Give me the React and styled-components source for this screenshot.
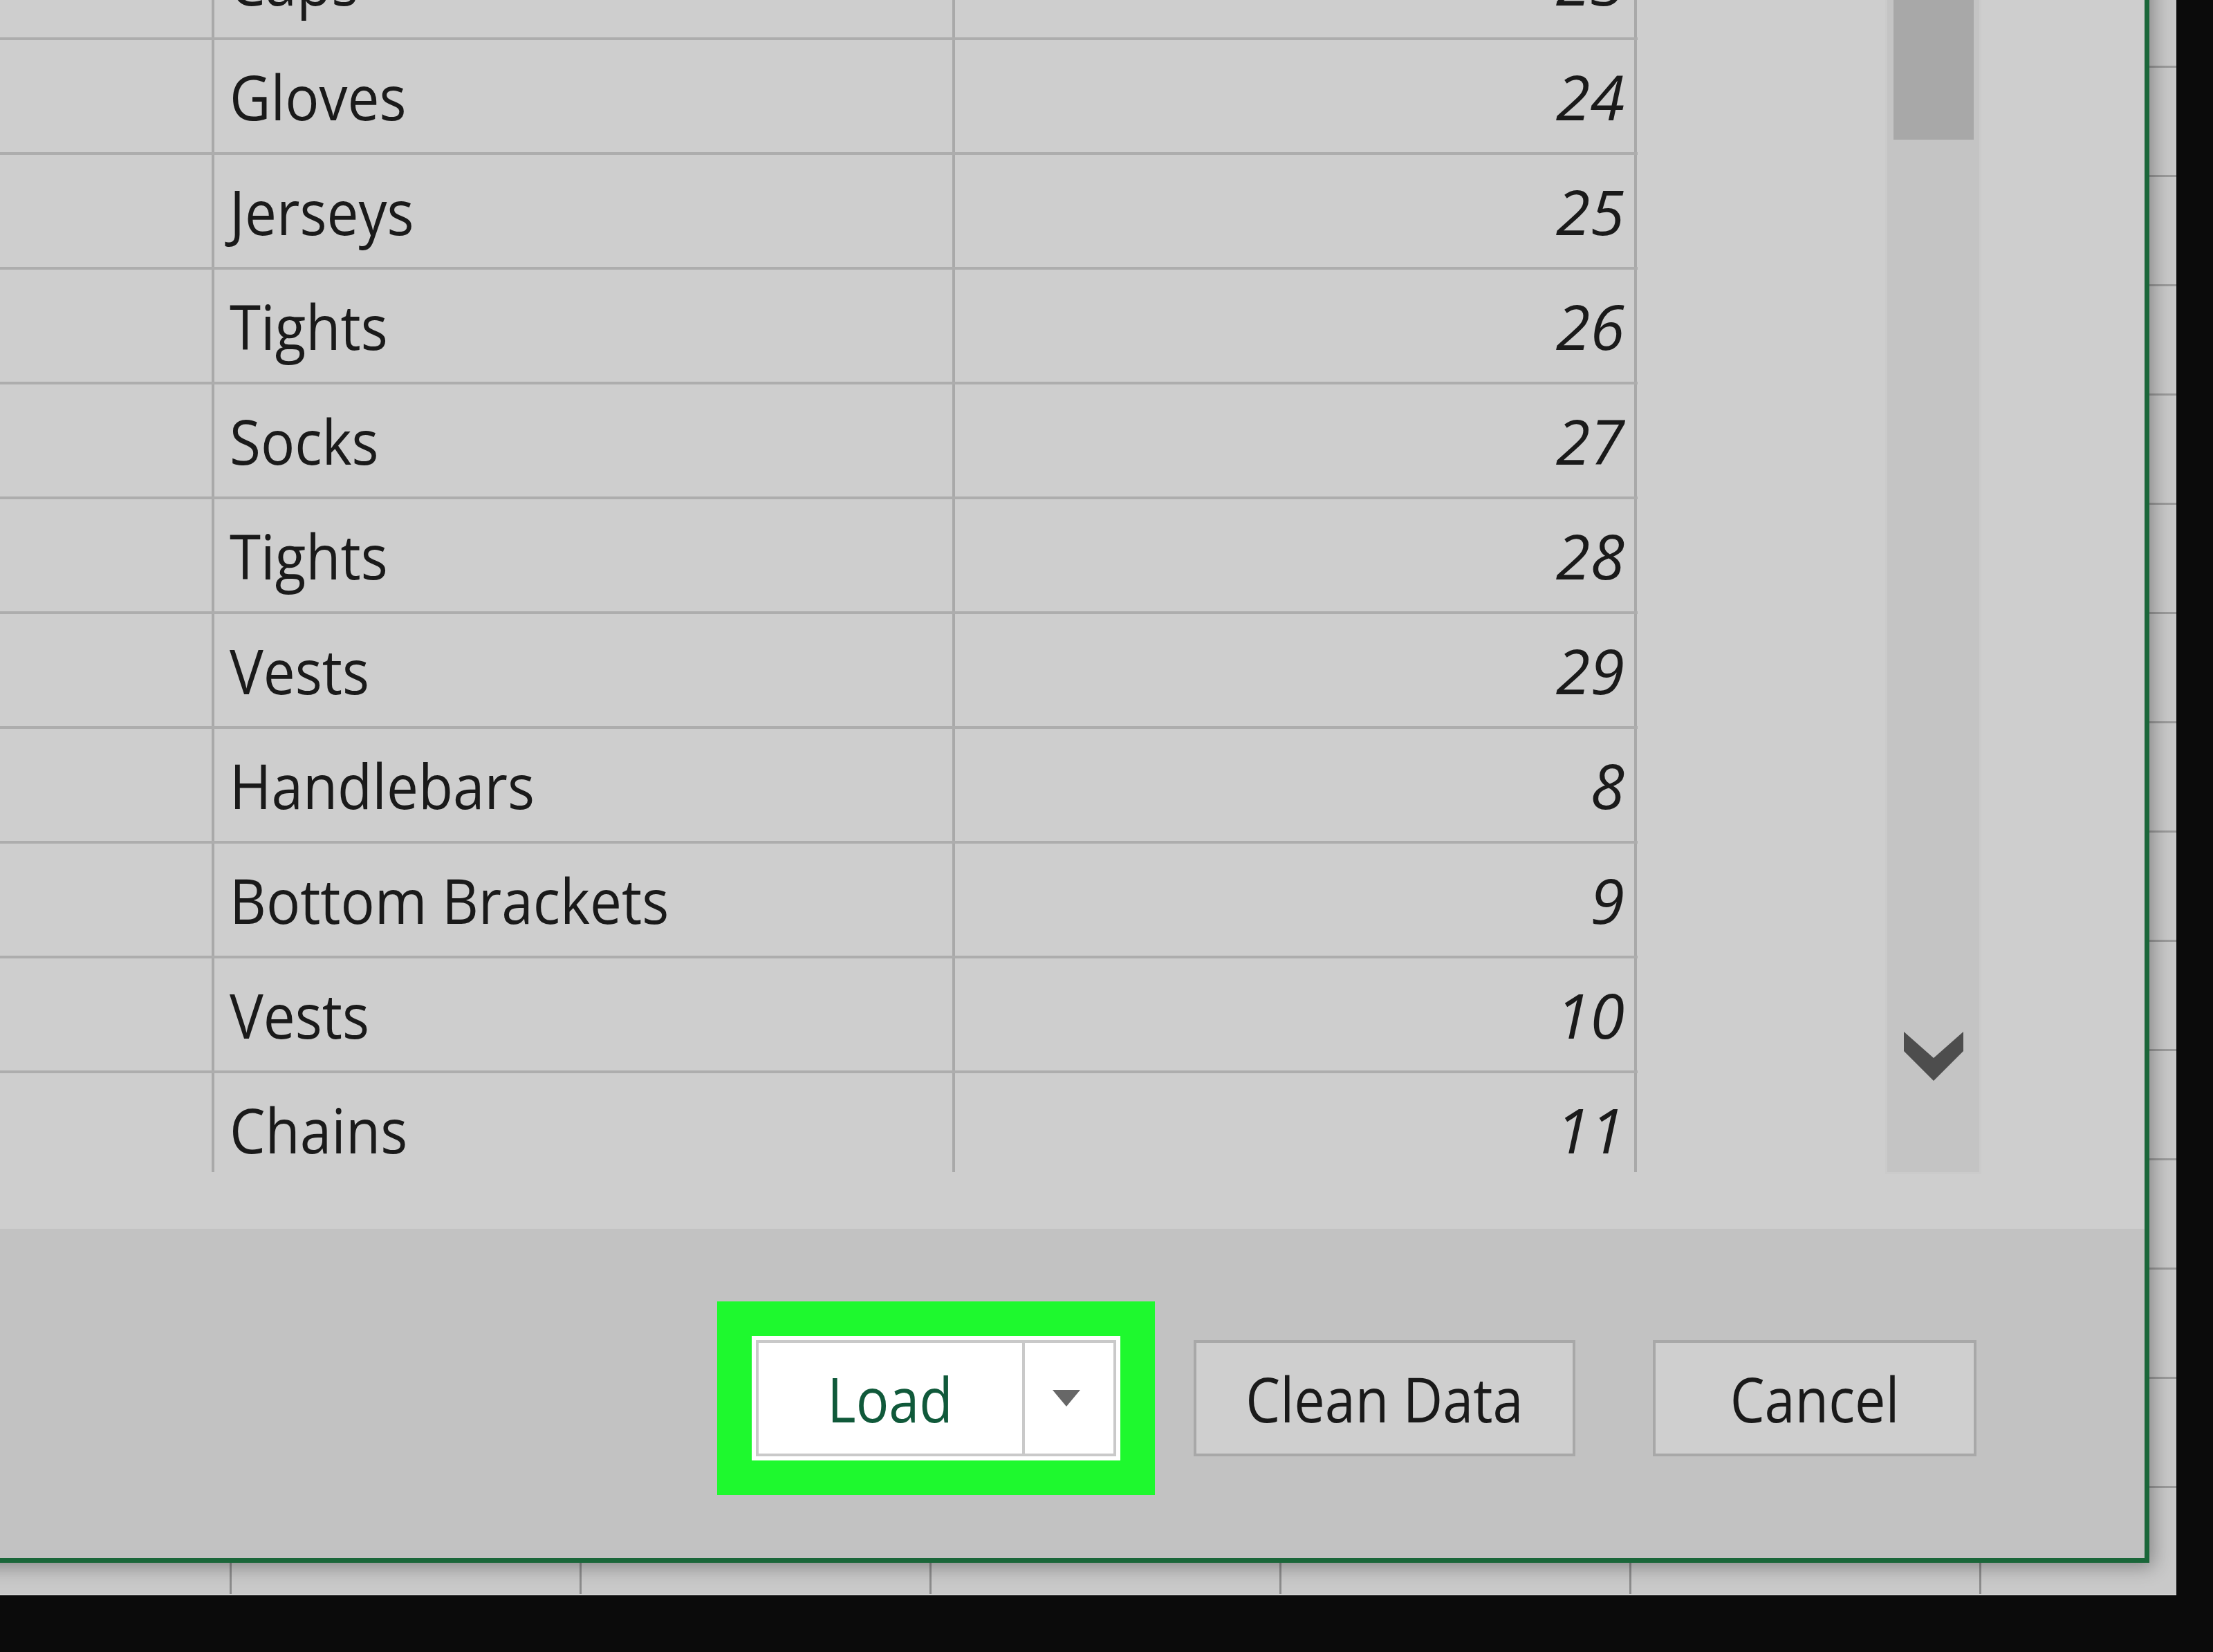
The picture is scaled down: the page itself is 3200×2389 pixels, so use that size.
import React from 'react';
import styled, { createGlobalStyle } from 'styled-components';

const Global = createGlobalStyle`
  html, body {
    margin: 0;
    padding: 0;
    background: #0b0b0b;
  }
  body {
    width: 3200px;
    height: 2389px;
    overflow: hidden;
    font-family: "Open Sans", "Noto Sans", sans-serif;
  }
  * { box-sizing: border-box; }
`;

const Screen = styled.div`
  position: relative;
  width: 3147px;
  height: 2307px;
  overflow: hidden;
  background-color: #c9c9c9;
  background-image:
    linear-gradient(to right, #8c8c8c 0 3px, transparent 3px),
    linear-gradient(to bottom, #9b9b9b 0 3px, transparent 3px);
  background-size: 506px 100%, 100% 158px;
  background-position: 332px 0, 0 95px;
  border-bottom: 2px solid #d2d2d2;
`;

const Dialog = styled.div`
  position: absolute;
  left: -40px;
  top: -115px;
  width: 3148px;
  height: 2375px;
  border: 7px solid #1a6639;
  display: flex;
  flex-direction: column;
  box-shadow: 0 0 26px 6px rgba(0, 0, 0, 0.33);
`;

const Content = styled.div`
  height: 1885px;
  flex: none;
  display: flex;
  align-items: flex-start;
  background: #cecece;
  padding-right: 239px;
`;

const TableViewport = styled.div`
  width: 2401px;
  height: 1803px;
  overflow: hidden;
  flex: none;
`;

const Row = styled.div`
  display: grid;
  grid-template-columns: 343px 1071px 986px;
  height: 166px;
  border-bottom: 4px solid #adadad;
`;

const Cell = styled.div`
  display: flex;
  align-items: center;
  justify-content: ${(p) => (p.$numeric ? 'flex-end' : 'flex-start')};
  padding: ${(p) => (p.$numeric ? '0 14px 0 0' : '0 0 0 22px')};
  border-right: 4px solid #a9a9a9;
  overflow: hidden;
`;

const CellText = styled.span`
  display: inline-block;
  font-size: 90px;
  line-height: 1;
  white-space: nowrap;
  color: #1a1a1a;
  font-style: ${(p) => (p.$numeric ? 'italic' : 'normal')};
  transform: scaleX(${(p) => (p.$numeric ? 1 : 0.91)});
  transform-origin: ${(p) => (p.$numeric ? 'right center' : 'left center')};
`;

const Scrollbar = styled.div`
  margin-left: 361px;
  width: 133px;
  height: 1803px;
  flex: none;
  background: #c4c4c4;
  box-shadow: 0 0 0 3px #cbcbcb;
  display: flex;
  flex-direction: column;
  align-items: center;
`;

const Thumb = styled.div`
  width: 116px;
  height: 310px;
  background: #a8a8a8;
`;

const ScrollArrow = styled.div`
  margin-top: auto;
  height: 336px;
  width: 100%;
  display: flex;
  align-items: center;
  justify-content: center;
`;

const Footer = styled.div`
  flex: 1;
  background: #c2c2c2;
  display: flex;
  justify-content: flex-end;
  align-items: flex-start;
  gap: 112px;
  padding: 161px 243px 0 0;
`;

const Button = styled.div`
  width: ${(p) => p.$w}px;
  height: 168px;
  border: 4px solid #a8a8a8;
  background: #cfcfcf;
  display: flex;
  align-items: center;
  justify-content: center;
`;

const ButtonLabel = styled.span`
  display: inline-block;
  font-size: 90px;
  line-height: 1;
  white-space: nowrap;
  color: ${(p) => p.$color || '#1a1a1a'};
  transform: scaleX(0.88);
`;

const SplitButton = styled.div`
  width: 521px;
  height: 168px;
  display: flex;
  border: 4px solid #c9c9c9;
  background: #ffffff;
  box-shadow: 0 0 0 6px #ffffff;
  outline: 50px solid #1ef92e;
  outline-offset: 6px;
`;

const SplitMain = styled.div`
  width: 385px;
  border-right: 4px solid #c9c9c9;
  display: flex;
  align-items: center;
  justify-content: center;
`;

const SplitArrow = styled.div`
  flex: 1;
  display: flex;
  align-items: center;
  justify-content: center;
  padding-right: 8px;
`;

const rows = [
  ['Caps', '23'],
  ['Gloves', '24'],
  ['Jerseys', '25'],
  ['Tights', '26'],
  ['Socks', '27'],
  ['Tights', '28'],
  ['Vests', '29'],
  ['Handlebars', '8'],
  ['Bottom Brackets', '9'],
  ['Vests', '10'],
  ['Chains', '11'],
];

const Chevron = () => (
  <svg width="86" height="71" viewBox="0 0 86 71">
    <polygon points="0,0 43,38 86,0 86,28 43,71 0,28" fill="#4d4d4d" />
  </svg>
);

const Caret = () => (
  <svg width="40" height="24" viewBox="0 0 40 24">
    <polygon points="0,0 40,0 20,24" fill="#676767" />
  </svg>
);

export default function App() {
  return (
    <>
      <Global />
      <Screen>
        <Dialog>
          <Content>
            <TableViewport>
              {rows.map(([name, num], i) => (
                <Row key={i}>
                  <Cell />
                  <Cell>
                    <CellText>{name}</CellText>
                  </Cell>
                  <Cell $numeric>
                    <CellText $numeric>{num}</CellText>
                  </Cell>
                </Row>
              ))}
            </TableViewport>
            <Scrollbar>
              <Thumb />
              <ScrollArrow>
                <Chevron />
              </ScrollArrow>
            </Scrollbar>
          </Content>
          <Footer>
            <SplitButton>
              <SplitMain>
                <ButtonLabel $color="#10593a">Load</ButtonLabel>
              </SplitMain>
              <SplitArrow>
                <Caret />
              </SplitArrow>
            </SplitButton>
            <Button $w={552}>
              <ButtonLabel>Clean Data</ButtonLabel>
            </Button>
            <Button $w={468}>
              <ButtonLabel>Cancel</ButtonLabel>
            </Button>
          </Footer>
        </Dialog>
      </Screen>
    </>
  );
}
